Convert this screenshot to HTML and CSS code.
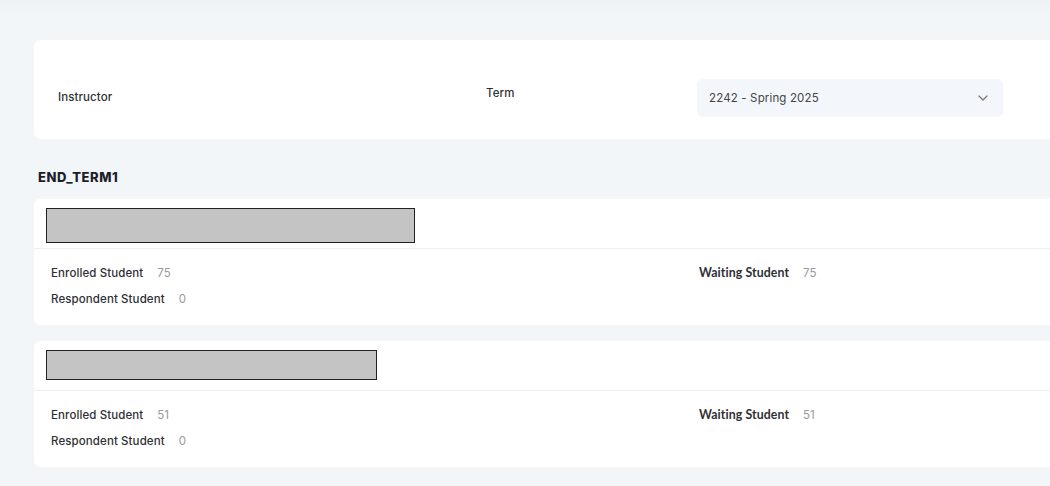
FILE: index.html
```html
<!DOCTYPE html>
<html>
<head>
<meta charset="utf-8">
<link rel="stylesheet" href="styles.css">
</head>
<body>
<div class="page">
  <section class="filter-card">
    <div class="filter-label instructor">Instructor</div>
    <div class="filter-label term">Term</div>
    <div class="select">
      <span>2242 - Spring 2025</span>
      <svg class="chev" width="10" height="6" viewBox="0 0 10 6"><path d="M1 1 L5 5 L9 1" fill="none" stroke="#777" stroke-width="1.2" stroke-linecap="round" stroke-linejoin="round"/></svg>
    </div>
  </section>

  <h2 class="group-title">END_TERM1</h2>

  <section class="course-card">
    <div class="course-head"><div class="redact r1"></div></div>
    <div class="course-body">
      <div class="stat"><span class="stat-label">Enrolled Student</span><span class="stat-val">75</span></div>
      <div class="stat"><span class="stat-label alt">Waiting Student</span><span class="stat-val">75</span></div>
      <div class="stat"><span class="stat-label">Respondent Student</span><span class="stat-val">0</span></div>
    </div>
  </section>

  <section class="course-card">
    <div class="course-head"><div class="redact r2"></div></div>
    <div class="course-body">
      <div class="stat"><span class="stat-label">Enrolled Student</span><span class="stat-val">51</span></div>
      <div class="stat"><span class="stat-label alt">Waiting Student</span><span class="stat-val">51</span></div>
      <div class="stat"><span class="stat-label">Respondent Student</span><span class="stat-val">0</span></div>
    </div>
  </section>
</div>
</body>
</html>
```

FILE: styles.css
```css
html, body {
  margin: 0;
  padding: 0;
  overflow: hidden;
}
body {
  width: 1050px;
  height: 486px;
  background: linear-gradient(#eef1f5 0px, #f3f6f9 14px, #f3f6f9 100%);
  font-family: Inter, "Noto Sans", sans-serif;
  color: #2d2d33;
}
.page {
  padding: 40px 0 0 34px;
  width: 1330px;
}
.filter-card {
  background: #fff;
  border-radius: 7px;
  height: 99px;
  display: flex;
  align-items: center;
  box-sizing: border-box;
}
.filter-label {
  font-size: 11.5px;
  font-weight: 500;
  color: #2f2f35;
  letter-spacing: 0.1px;
}
.instructor {
  width: 428px;
  padding-left: 24px;
  padding-top: 14px;
}
.term {
  width: 211px;
  padding-top: 7px;
}
.select {
  width: 306px;
  height: 38px;
  background: #f3f6fa;
  border-radius: 6px;
  display: flex;
  align-items: center;
  justify-content: space-between;
  padding: 0 15px 0 12px;
  box-sizing: border-box;
  font-size: 11.5px;
  letter-spacing: 0.15px;
  color: #454548;
  margin-top: 16px;
}
.chev { margin-top: 1px; }
.group-title {
  margin: 30px 0 0 4px;
  font-size: 13px;
  font-weight: 800;
  letter-spacing: 0.5px;
  color: #1d1d2b;
  height: 30px;
  line-height: 16px;
}
.course-card {
  background: #fff;
  border-radius: 6px;
  margin-bottom: 16px;
}
.course-head {
  height: 50px;
  border-bottom: 1px solid #eceff2;
  padding: 9px 0 0 12px;
  box-sizing: border-box;
}
.redact {
  background: #c4c4c4;
  border: 1px solid #222;
  box-sizing: border-box;
}
.r1 { width: 369px; height: 35px; }
.r2 { width: 331px; height: 30px; }
.course-body {
  display: grid;
  grid-template-columns: 648px 1fr;
  padding: 16px 0 18px 17px;
  row-gap: 10px;
}
.stat {
  font-size: 11.5px;
  line-height: 16px;
  display: flex;
  gap: 14px;
}
.stat-label {
  font-weight: 500;
  color: #2f2f35;
  letter-spacing: 0.1px;
}
.stat-label.alt {
  font-family: Lato, sans-serif;
  font-weight: 700;
  font-size: 12.3px;
  letter-spacing: 0.1px;
}
.stat-val {
  color: #9a9a9e;
}
```
